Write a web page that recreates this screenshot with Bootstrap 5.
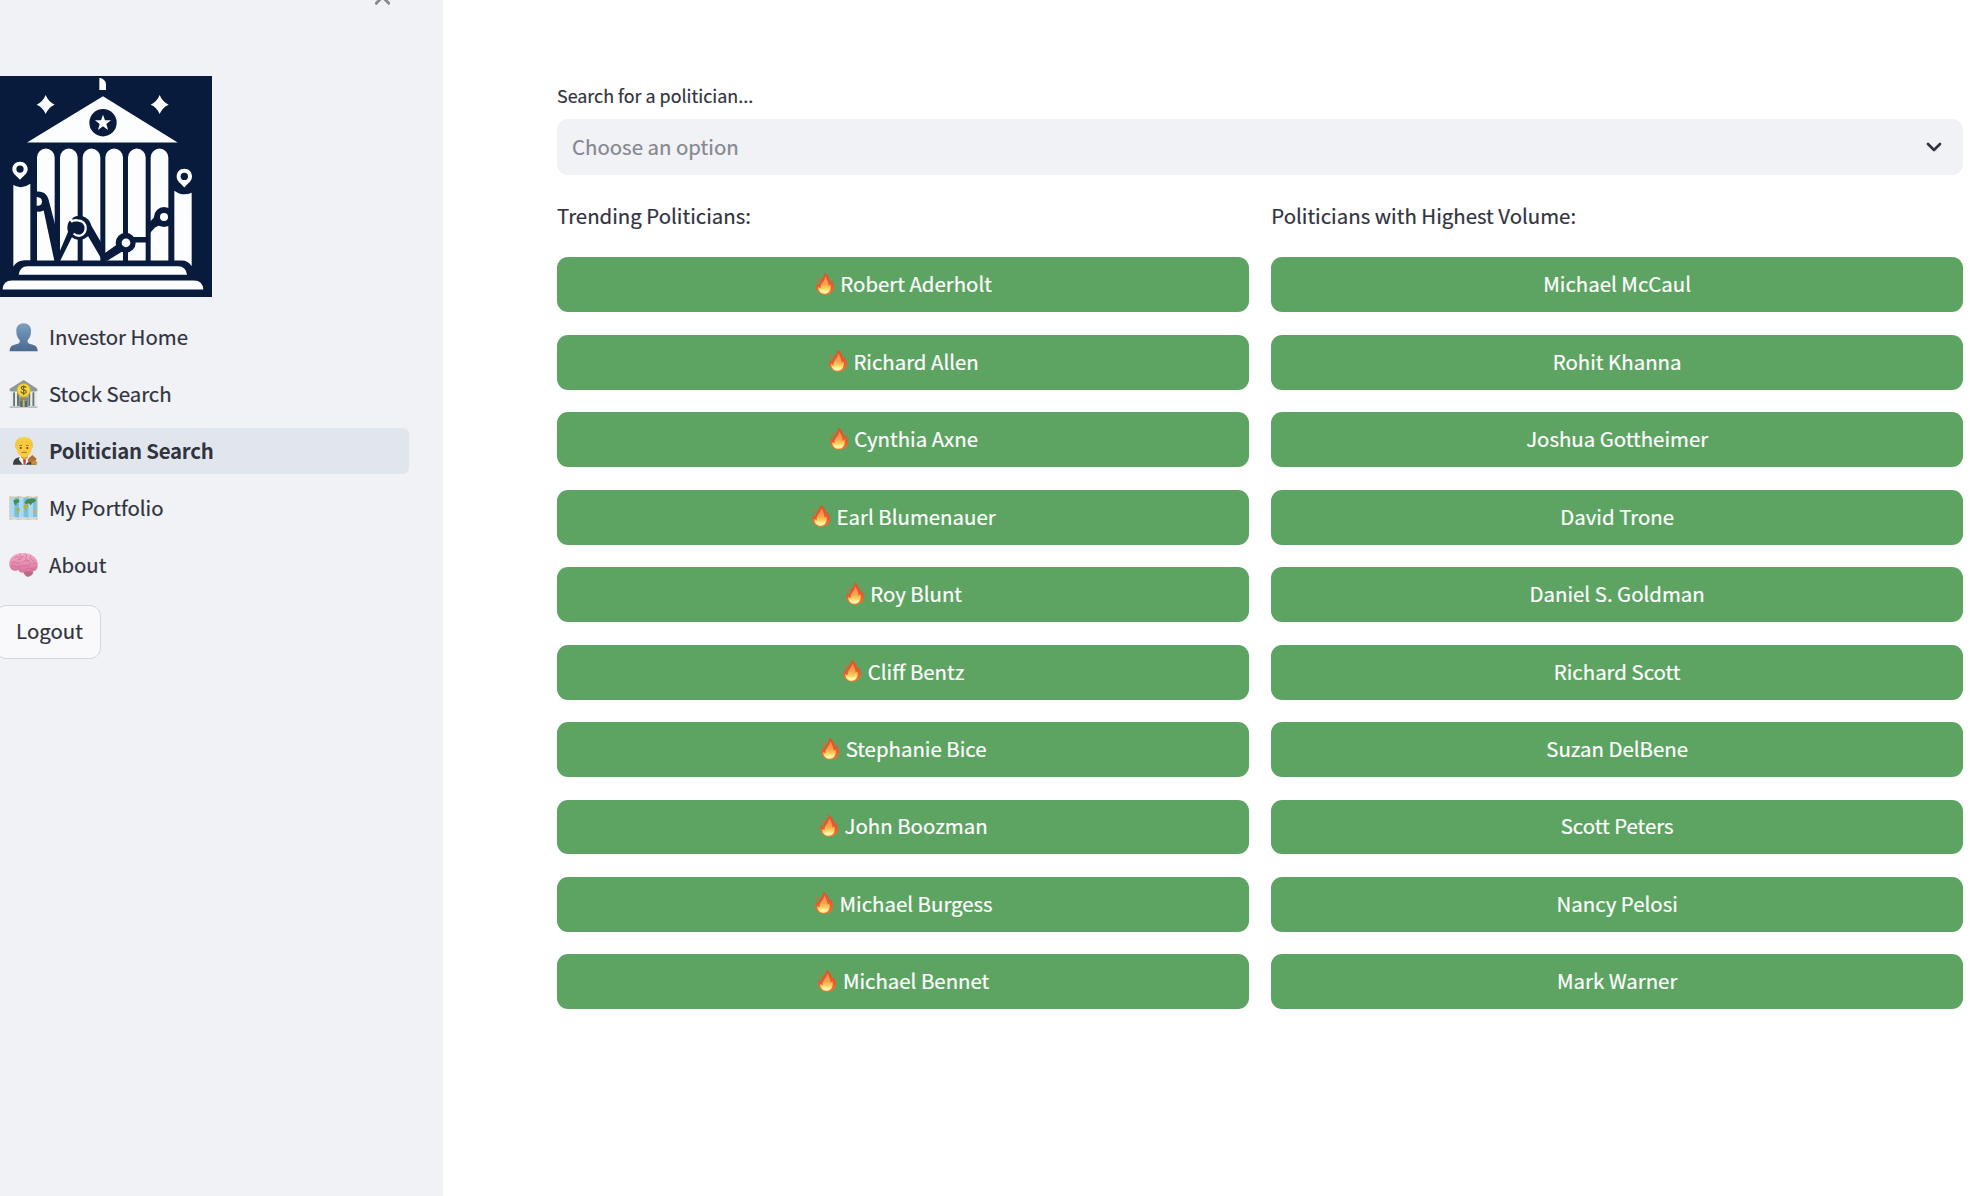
<!DOCTYPE html>
<html lang="en">
<head>
<meta charset="utf-8">
<meta name="viewport" content="width=device-width, initial-scale=1">
<title>Politician Search</title>
<link rel="stylesheet" href="https://cdn.jsdelivr.net/npm/bootstrap@5.3.0/dist/css/bootstrap.min.css">
<style>
body{font-family:"Noto Sans CJK SC","Noto Sans CJK JP",sans-serif;font-size:20.4px;line-height:30px;color:#31333f;height:1196px;overflow:hidden;background:#fff;-webkit-text-stroke:.2px currentColor}
.side-pane{width:443px;background:#f0f2f6}
.close-row{height:75.5px;padding-right:53px}
.brand-logo{width:212px;height:221.5px}
.side-nav{margin-top:17px;gap:11.5px;width:408.5px}
.side-nav .nav-link{height:45.5px;padding:0 0 0 9px;gap:10px;color:#31333f;border-radius:0 6px 6px 0}
.side-nav .nav-link.active{background:#e1e6ed;font-weight:700;letter-spacing:-.25px;-webkit-text-stroke:0}
.side-nav svg{width:30px;height:30px}
.side-nav span{padding-bottom:1.700px}
.btn-logout{margin:17px 0 0 -5px;width:106px;height:54px;background:#f9f9fb;border:1px solid #d6d7db;border-radius:11px;font-size:inherit;color:#31333f;padding:0 0 2px 3px}
.main-pane{padding:81px 13px 0 114px}
.search-label{font-size:17.9px;line-height:28px;margin-bottom:9.600px}
.search-box{height:56.8px;background:#f0f2f6;border-radius:11px;padding:0 20px 0 15px;color:#86878f;margin-bottom:25px}
.search-box span{padding-bottom:2px}
.list-title{height:30px;margin-bottom:27px}
.pol-cols{--bs-gutter-x:22.6px}
.pol-list{gap:22.6px}
.btn-pol{height:54.87px;background:#5da463;color:#fff;border:0;border-radius:11px;font-size:inherit;line-height:30px;padding:0 0 3px;gap:6.500px}
.btn-pol.d-flex{padding-left:2px}
.btn-pol svg{width:18px;height:23px}
</style>
<script src="https://cdn.jsdelivr.net/npm/bootstrap@5.3.0/dist/js/bootstrap.bundle.min.js"></script>
</head>
<body>
<svg width="0" height="0" class="position-absolute" aria-hidden="true">
<defs>
<linearGradient id="gFire" x1="0" y1="0" x2="0" y2="1"><stop offset="0" stop-color="#e2502c"/><stop offset=".6" stop-color="#ea5a2e"/><stop offset="1" stop-color="#f07a35"/></linearGradient>
<linearGradient id="gCore" x1="0" y1="0" x2="0" y2="1"><stop offset="0" stop-color="#f08a40"/><stop offset=".45" stop-color="#f5a14c"/><stop offset=".7" stop-color="#fbd45c"/><stop offset=".88" stop-color="#fff8b8"/><stop offset="1" stop-color="#fde26a"/></linearGradient>
<linearGradient id="gUser" x1="0" y1="0" x2="0" y2="1"><stop offset="0" stop-color="#7c9fc4"/><stop offset="1" stop-color="#4b688d"/></linearGradient>
<linearGradient id="gBrain" x1="0" y1="0" x2="0" y2="1"><stop offset="0" stop-color="#f3b0cb"/><stop offset="1" stop-color="#d9719b"/></linearGradient>
<linearGradient id="gHair" x1="0" y1="0" x2="0" y2="1"><stop offset="0" stop-color="#f6d64c"/><stop offset="1" stop-color="#eeb52a"/></linearGradient>
</defs>
<symbol id="fire" viewBox="107 97 54 69">
<path d="M133 98c9 8 17 18 17 30 2-2 3-5 3-8 5 6 8 14 8 22 0 14-11 23-26 23s-27-9-27-23c0-6 2-11 4-15 1 4 3 7 5 8-1-14 15-20 16-37z" fill="url(#gFire)"/>
<path d="M112 116c3-3 5-1 4 3s-2 6-4 6c-2-2-2-6 0-9z" fill="#e2673a"/>
<path d="M135 109c4 9 10 19 10 29 3-1 4-3 5-5 3 9 1 19-5 25-7 6-19 7-25 0-5-5-7-11-6-17 3 3 4 4 7 4-2-14 13-20 14-36z" fill="url(#gCore)"/>
</symbol>
</svg>
<div class="d-flex h-100">
<aside class="side-pane flex-shrink-0 d-flex flex-column align-items-start">
<div class="close-row w-100 d-flex justify-content-end align-items-start">
<svg width="15" height="5" viewBox="0 0 15 5" fill="none" stroke="#858792" stroke-width="2.8"><path d="M.3 4.2 7.500-3l7.200 7.200"/></svg>
</div>
<svg class="brand-logo" viewBox="0 47 636 664" preserveAspectRatio="none" role="img" aria-label="Logo">
<path fill="#091b3c" d="M0 47h636v664H0z"/>
<g fill="#fcfdff">
<path d="M300 53c10 2 18 9 18 19v17h-20V53zM137 104q8 20 27 29-19 8-27 28-8-20-27-28 19-9 27-29zM479 104q8 20 27 29-19 8-27 28-8-20-27-28 19-9 27-29zM309 108 533 246H81z"/>
<path d="M111 600V291a26 26 0 0 1 53 0v309zM180 600V291a26 26 0 0 1 53 0v309zM248 600V291a26 26 0 0 1 53 0v309zM316 600V291a26 26 0 0 1 53 0v309zM384 600V291a26 26 0 0 1 53 0v309zM452 600V291a26 26 0 0 1 53 0v309z"/>
<path d="M40 374q26 14 51-4v229H74q-22 0-34 19zM523 391q24 18 52 6v220q-10-17-30-17h-22z"/>
<path d="M56 643q3-26 27-26h451q24 0 27 26zM8 687q1-27 28-27h546q26 0 28 27z"/>
</g>
<circle cx="309" cy="187" r="41" fill="#091b3c"/>
<path fill="#fcfdff" d="m309 163 6 17h18l-14 11 5 18-15-11-15 11 5-18-14-11h18z"/>
<g fill="#fcfdff"><path d="M60 304c14 0 23 10 23 22 0 14-12 20-23 32-11-12-23-18-23-32 0-12 9-22 23-22zM553 325c14 0 23 10 23 23 0 14-12 20-23 33-11-13-23-19-23-33 0-13 9-23 23-23z"/></g>
<g fill="#091b3c"><circle cx="60" cy="326" r="11"/><circle cx="553" cy="348" r="11"/>
<path d="M100 393h15q22 0 30 22l21 80v106h-3l-32-151q-13 6-31 2z"/>
<path d="M178 575 212 496 222 518 180 602h-2zM266 482l37 63v48l-43-73zM314 578l40-28 14 22-46 29h-8zM400 530h40v16h-40zM450 484l16-17 16 26-17 8-15 17z"/>
<circle cx="238" cy="502" r="36"/><circle cx="377" cy="547" r="30"/><circle cx="492" cy="470" r="30"/></g>
<path fill="#fcfdff" d="M110 410q16 1 16 14t-16 12z"/>
<circle cx="378" cy="547" r="13" fill="#fcfdff"/><circle cx="492" cy="470" r="12" fill="#fcfdff"/>
<path d="M213 484q8-6 20-4 24 2 24 24c-1 20-22 29-36 15" fill="none" stroke="#fcfdff" stroke-width="7"/>
<path d="M205 478q8-5 14-5l-6 10z" fill="#fcfdff"/>
<path d="M208 492h28q13 0 13 11-1 11-13 13h-22z" fill="#091b3c"/>
</svg>
<nav class="side-nav nav flex-column">
<a class="nav-link d-flex align-items-center" href="#">
<svg viewBox="27 35 90 90"><path fill="url(#gUser)" d="M71 39c16 0 23 11 22 25 0 12-5 20-10 25-1 8 1 10 8 12 15 3 22 8 22 22H29c0-14 7-19 22-22 7-2 9-4 8-12-5-5-10-13-10-25-1-14 6-25 22-25z"/></svg>
<span>Investor Home</span></a>
<a class="nav-link d-flex align-items-center" href="#">
<svg viewBox="27 207 90 90"><path fill="#8a9a9c" d="m71 210 41 26v8H29v-8z"/><path fill="#a9b5b2" d="M35 244h72v44H35z"/><path fill="#64767a" d="M40 248h5v40h-5zm11 0h6v40h-6zm35 0h5v40h-5zm11 0h5v40h-5z"/><path fill="#e7ebeb" d="M32 246h7v45h-7zm13 0h6v45h-6zm46 0h6v45h-6zm13 0h7v45h-7z"/><path fill="#8f8a66" d="M58 262h27v30H58z"/><path fill="#456d8e" d="M61 273h6v18h-6zm14 0h6v18h-6z"/><path fill="#d4b758" d="M69 270h4v22h-4z"/><path fill="#b7bebd" d="M29 289h29v5H29zm56 0h27v5H85z"/><circle cx="71" cy="241" r="21" fill="#e2b526"/><circle cx="71" cy="240" r="18" fill="#f8d842"/><path d="M78 234c-1-7-14-6-14 0 0 7 15 4 15 11 0 7-15 7-16-1m8-18v29" fill="none" stroke="#776123" stroke-width="3.500"/></svg>
<span>Stock Search</span></a>
<a class="nav-link active d-flex align-items-center" href="#">
<svg viewBox="27 49 90 90"><path fill="#3c3e43" d="M39 135c0-15 8-20 20-22h27c16 2 23 8 23 22z"/><path fill="#f5f6f7" d="m61 110 12 12 14-12 4 9-14 16h-9L56 119z"/><path fill="#c93b3e" d="m69 120 4-3 5 3-2 15h-5z"/><path fill="#e9ac25" d="M63 100h20v13l-10 7-10-7z"/><path fill="url(#gHair)" d="M46 83c-3-19 6-31 26-31s29 12 26 31l-6 7H52z"/><path fill="#fbcb3f" d="M49 79c4-4 7-8 8-12h30c1 5 4 9 8 12 2 18-7 33-22 33S48 97 49 79z"/><circle cx="62" cy="85" r="3" fill="#5b421d"/><circle cx="82" cy="85" r="3" fill="#5b421d"/><path d="M65 99q7-3 15 0M58 78q4-3 8 0m12 0q4-3 8 0" fill="none" stroke="#8b5d18" stroke-width="2.500"/><path fill="#b46f35" d="m83 119 14-13 13 11-10 14-9-5-6 5z"/><path fill="#d08a35" d="M94 126q10-8 18 3l-4 6H94z"/></svg>
<span>Politician Search</span></a>
<a class="nav-link d-flex align-items-center" href="#">
<svg viewBox="27 218 90 90"><path fill="#d9c9a2" d="m28 227 15 2 14-2 14 3 14-3 14 3 14-3v73l-14-3-14 3-14-3-14 3-14-3-15 3z"/><path fill="#a5dbf4" d="m31 231 12 2v60l-12 2zm26 0 14 2v60l-14 2zm28 0 14 2v60l-14 2z"/><path fill="#76bfe5" d="m43 233 14-2v64l-14-2zm28 0 14-2v64l-14-2zm28 0 11-2v64l-11-2z"/><path fill="#4a8a53" d="m40 240 13-4 6 5-4 6-5 2-1 7-6-5zM74 245l8-8 14-3 12 4-3 7-8 3-5 7-5-6-6 2-7-2z"/><path fill="#a9b43b" d="m51 261 9 4-2 8-5 10-3-12zM72 253l10-1 4 6-5 5-1 10-5-4-1-8-4-3z"/><path fill="#e9ad3e" d="m97 272 6-4 4 6-4 6zM54 271h4l-2 6zM73 256l8 2-2 5z"/><path fill="#ddd" d="m60 234 8-2-3 8zM32 291l11-1 14 2 14-2 14 2 14-2 11 1v5l-11-2-14 3-14-3-14 3-14-3-11 2z"/></svg>
<span>My Portfolio</span></a>
<a class="nav-link d-flex align-items-center" href="#">
<svg viewBox="27 392 90 90"><path fill="#b96b86" d="M75 455c10-3 20-2 25 2 0 8-10 16-18 15-6-1-8-7-12-12z"/><path fill="url(#gBrain)" d="M28 436c-2-18 14-34 36-34 23-5 48 11 49 30 2 13-3 22-13 24-10 2-15-1-25 2-9 4-18 1-19-6-11 6-26 1-28-16z"/><g fill="none" stroke="#c66690" stroke-width="2" stroke-linecap="round"><path d="M35 431q8-9 13-2t12-1M43 415q9-8 15-1t13-5M60 403q-3 8 5 10M75 403q9 4 3 11t9 10M91 409q-4 8 4 12t9 6M56 451q3-14 18-12t18-8M34 441q9-5 14 1t11-4M69 428q5-9 14-2M78 449q8-7 14-1t16-5M99 432q6 2 10-1M63 419q-8 5-10 0"/></g></svg>
<span>About</span></a>
</nav>
<button class="btn btn-logout" type="button">Logout</button>
</aside>
<main class="main-pane flex-grow-1">
<div class="search-label">Search for a politician...</div>
<div class="search-box d-flex align-items-center justify-content-between"><span>Choose an option</span>
<svg width="18" height="12" viewBox="0 0 18 12" fill="none" stroke="#31333f" stroke-width="2.700" stroke-linecap="round" stroke-linejoin="round"><path d="m3 3 6 6 6-6"/></svg></div>
<div class="row pol-cols">
<section class="col-6">
<div class="list-title">Trending Politicians:</div>
<div class="pol-list d-flex flex-column">
<button class="btn btn-pol d-flex align-items-center justify-content-center"><svg><use href="#fire"/></svg>Robert Aderholt</button>
<button class="btn btn-pol d-flex align-items-center justify-content-center"><svg><use href="#fire"/></svg>Richard Allen</button>
<button class="btn btn-pol d-flex align-items-center justify-content-center"><svg><use href="#fire"/></svg>Cynthia Axne</button>
<button class="btn btn-pol d-flex align-items-center justify-content-center"><svg><use href="#fire"/></svg>Earl Blumenauer</button>
<button class="btn btn-pol d-flex align-items-center justify-content-center"><svg><use href="#fire"/></svg>Roy Blunt</button>
<button class="btn btn-pol d-flex align-items-center justify-content-center"><svg><use href="#fire"/></svg>Cliff Bentz</button>
<button class="btn btn-pol d-flex align-items-center justify-content-center"><svg><use href="#fire"/></svg>Stephanie Bice</button>
<button class="btn btn-pol d-flex align-items-center justify-content-center"><svg><use href="#fire"/></svg>John Boozman</button>
<button class="btn btn-pol d-flex align-items-center justify-content-center"><svg><use href="#fire"/></svg>Michael Burgess</button>
<button class="btn btn-pol d-flex align-items-center justify-content-center"><svg><use href="#fire"/></svg>Michael Bennet</button>
</div>
</section>
<section class="col-6">
<div class="list-title">Politicians with Highest Volume:</div>
<div class="pol-list d-flex flex-column">
<button class="btn btn-pol">Michael McCaul</button>
<button class="btn btn-pol">Rohit Khanna</button>
<button class="btn btn-pol">Joshua Gottheimer</button>
<button class="btn btn-pol">David Trone</button>
<button class="btn btn-pol">Daniel S. Goldman</button>
<button class="btn btn-pol">Richard Scott</button>
<button class="btn btn-pol">Suzan DelBene</button>
<button class="btn btn-pol">Scott Peters</button>
<button class="btn btn-pol">Nancy Pelosi</button>
<button class="btn btn-pol">Mark Warner</button>
</div>
</section>
</div>
</main>
</div>
</body>
</html>
